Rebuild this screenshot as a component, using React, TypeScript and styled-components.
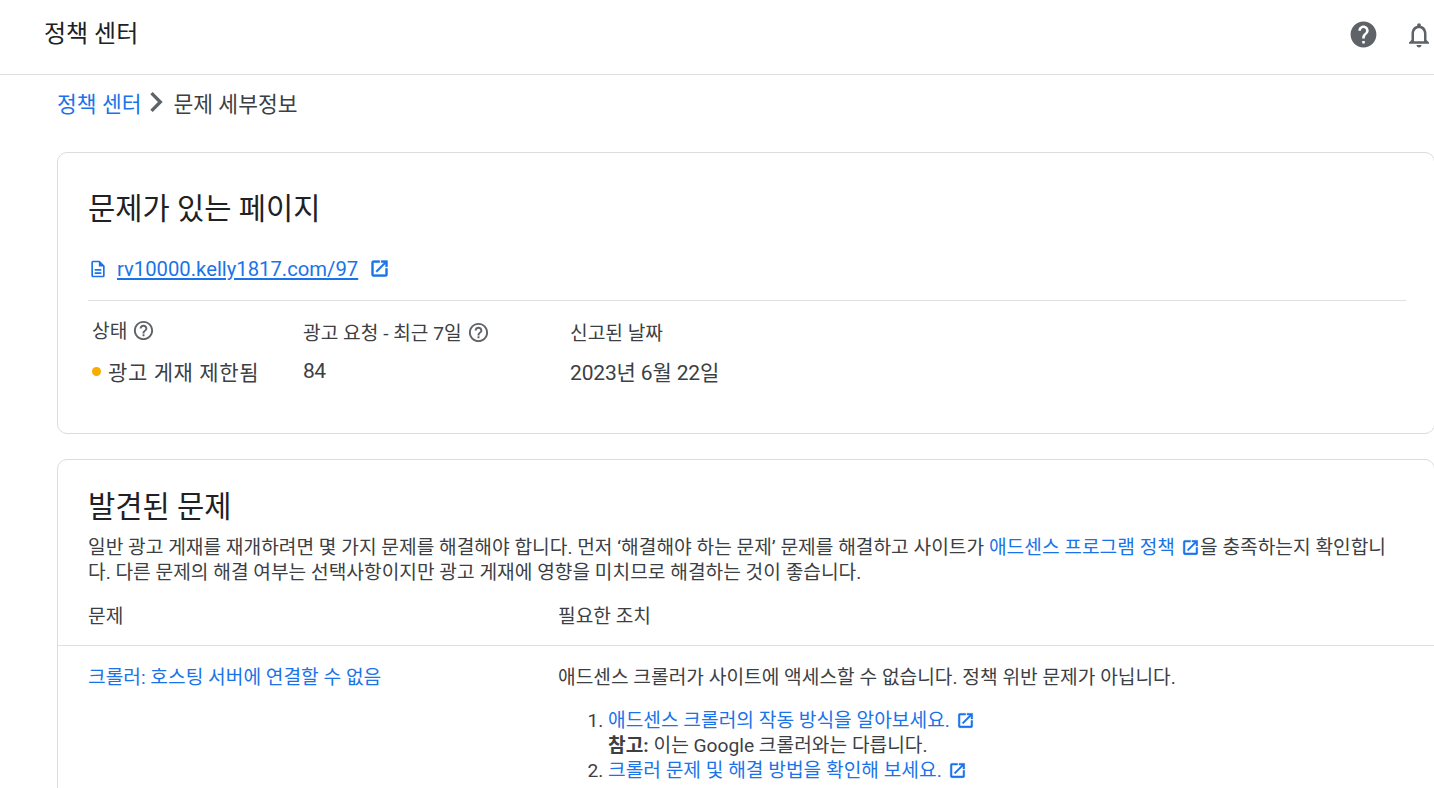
import React from "react";
import styled, { createGlobalStyle } from "styled-components";

const GlobalStyle = createGlobalStyle`
  html, body {
    margin: 0;
    padding: 0;
    height: 788px;
    overflow: hidden;
    background: #fff;
    font-family: Roboto, "Noto Sans CJK KR", sans-serif;
    color: #3c4043;
  }
`;

const Header = styled.header`
  display: flex;
  align-items: center;
  justify-content: space-between;
  height: 74px;
  padding: 0 0 0 44px;
  border-bottom: 1px solid #e0e0e0;
`;

const AppTitle = styled.div`
  font-size: 24px;
  color: #202124;
  margin-top: -11px;
`;

const HeaderIcons = styled.div`
  display: flex;
  align-items: center;
  gap: 25px;
  margin-top: -5px;
`;

const Main = styled.main`
  width: 1378px;
  margin-left: 57px;
`;

const Breadcrumb = styled.nav`
  display: flex;
  align-items: center;
  height: 54px;
  font-size: 21.5px;
  color: #3c4043;
  margin-bottom: 23px;
`;

const CrumbLink = styled.a`
  color: #1a73e8;
`;

const CrumbArrow = styled.svg`
  width: 40px;
  height: 40px;
  margin: 0 -3px 0 -5px;
  fill: #5f6368;
`;

const Card = styled.section<{ $height: number }>`
  box-sizing: border-box;
  height: ${(p) => p.$height}px;
  border: 1px solid #dadce0;
  border-radius: 10px;
  margin-bottom: 25px;
  background: #fff;
`;

const CardTitle = styled.h2`
  margin: 0;
  font-size: 29.6px;
  font-weight: 400;
  color: #202124;
  line-height: 40px;
`;

const TopBlock = styled.div<{ $top: number }>`
  padding: ${(p) => p.$top}px 28px 0 30px;
`;

const UrlRow = styled.div`
  display: flex;
  align-items: center;
  height: 59px;
  margin-top: 10px;
  border-bottom: 1px solid #e0e0e0;
  padding-bottom: 2px;
`;

const UrlLink = styled.a`
  color: #1a73e8;
  font-size: 20.25px;
  text-decoration: underline;
  margin: 0 11px 0 9px;
`;

const StatsGrid = styled.div`
  display: grid;
  grid-template-columns: 211px 267px 1fr;
  padding: 18px 0 0 4px;
  row-gap: 12px;
`;

const StatLabel = styled.div<{ $lift?: number }>`
  display: flex;
  align-items: center;
  gap: 5px;
  font-size: 19.2px;
  color: #3c4043;
  height: 26px;
  margin-top: ${(p) => -(p.$lift ?? 0)}px;
`;

const StatValue = styled.div<{ $spacing?: number }>`
  display: flex;
  align-items: center;
  font-size: 21px;
  letter-spacing: ${(p) => p.$spacing ?? 0}px;
  color: #3c4043;
  height: 28px;
`;

const StatusDot = styled.span`
  width: 9px;
  height: 9px;
  border-radius: 50%;
  background: #f9ab00;
  margin-right: 7px;
`;

const Description = styled.p`
  margin: 8px 0 0;
  padding: 0 30px;
  font-size: 19.2px;
  line-height: 25px;
  color: #3c4043;
  max-width: 1365px;
  box-sizing: border-box;
`;

const TextLink = styled.a`
  color: #1a73e8;
`;

const InlineIcon = styled.span`
  display: inline-block;
  vertical-align: -3px;
  margin: 0 0 0 6px;
  line-height: 0;
`;

const IssueHead = styled.div`
  display: grid;
  grid-template-columns: 470px 1fr;
  align-items: center;
  height: 60px;
  padding: 0 0 0 30px;
  font-size: 19.2px;
  color: #3c4043;
  border-bottom: 1px solid #e0e0e0;
`;

const IssueRow = styled.div`
  display: grid;
  grid-template-columns: 470px 1fr;
  padding: 19px 0 0 30px;
  font-size: 19.2px;
  line-height: 26px;
`;

const ActionList = styled.ol`
  margin: 17px 0 0;
  padding: 0 0 0 50px;
  line-height: 25px;
`;

const Strong = styled.strong`
  color: #3c4043;
  font-weight: 700;
`;

const OpenIcon = ({ size = 19 }: { size?: number }) => (
  <svg width={size} height={size} viewBox="0 0 24 24" fill="#1a73e8" stroke="#1a73e8" strokeWidth="0.7">
    <path d="M19 19H5V5h7V3H5a2 2 0 0 0-2 2v14a2 2 0 0 0 2 2h14a2 2 0 0 0 2-2v-7h-2v7zM14 3v2h3.59l-9.83 9.83 1.41 1.41L19 6.41V10h2V3h-7z" />
  </svg>
);

const HelpOutline = () => (
  <svg width="23" height="23" viewBox="0 0 24 24" fill="#5f6368">
    <path d="M11 18h2v-2h-2v2zm1-16C6.48 2 2 6.48 2 12s4.48 10 10 10 10-4.48 10-10S17.52 2 12 2zm0 18c-4.41 0-8-3.59-8-8s3.59-8 8-8 8 3.59 8 8-3.59 8-8 8zm0-14c-2.21 0-4 1.79-4 4h2c0-1.1.9-2 2-2s2 .9 2 2c0 2-3 1.75-3 5h2c0-2.25 3-2.5 3-5 0-2.21-1.79-4-4-4z" />
  </svg>
);

export default function App() {
  return (
    <>
      <GlobalStyle />
      <Header>
        <AppTitle>정책 센터</AppTitle>
        <HeaderIcons>
          <svg width="31" height="31" viewBox="0 0 24 24" fill="#5f6368">
            <path d="M12 2C6.48 2 2 6.48 2 12s4.48 10 10 10 10-4.48 10-10S17.52 2 12 2zm1 17h-2v-2h2v2zm2.07-7.75-.9.92C13.45 12.9 13 13.5 13 15h-2v-.5c0-1.1.45-2.1 1.17-2.83l1.24-1.26c.37-.36.59-.86.59-1.41 0-1.1-.9-2-2-2s-2 .9-2 2H8c0-2.21 1.79-4 4-4s4 1.79 4 4c0 .88-.36 1.68-.93 2.25z" />
          </svg>
          <svg width="30" height="30" viewBox="0 0 24 24" fill="#5f6368">
            <path d="M12 22c1.1 0 2-.9 2-2h-4c0 1.1.9 2 2 2zm6-6v-5c0-3.07-1.63-5.64-4.5-6.32V4c0-.83-.67-1.5-1.5-1.5s-1.5.67-1.5 1.5v.68C7.64 5.36 6 7.92 6 11v5l-2 2v1h16v-1l-2-2zm-2 1H8v-6c0-2.48 1.51-4.5 4-4.5s4 2.02 4 4.5v6z" />
          </svg>
        </HeaderIcons>
      </Header>
      <Main>
        <Breadcrumb>
          <CrumbLink>정책 센터</CrumbLink>
          <CrumbArrow viewBox="0 0 24 24">
            <path d="M8.59 16.59 13.17 12 8.59 7.41 10 6l6 6-6 6z" />
          </CrumbArrow>
          <span>문제 세부정보</span>
        </Breadcrumb>

        <Card $height={282}>
          <TopBlock $top={36}>
            <CardTitle>문제가 있는 페이지</CardTitle>
            <UrlRow>
              <svg width="20" height="20" viewBox="0 0 24 24" fill="#1a73e8">
                <path d="M14 2H6a2 2 0 0 0-2 2v16a2 2 0 0 0 2 2h12a2 2 0 0 0 2-2V8l-6-6zm4 18H6V4h7v5h5v11zM8 12h8v2H8v-2zm0 4h8v2H8v-2z" />
              </svg>
              <UrlLink>rv10000.kelly1817.com/97</UrlLink>
              <OpenIcon size={21} />
            </UrlRow>
            <StatsGrid>
              <StatLabel $lift={2}>
                상태 <HelpOutline />
              </StatLabel>
              <StatLabel>
                광고 요청 - 최근 7일 <HelpOutline />
              </StatLabel>
              <StatLabel>신고된 날짜</StatLabel>
              <StatValue $spacing={0.6}>
                <StatusDot />
                광고 게재 제한됨
              </StatValue>
              <StatValue $spacing={-0.5}>84</StatValue>
              <StatValue $spacing={-0.15}>2023년 6월 22일</StatValue>
            </StatsGrid>
          </TopBlock>
        </Card>

        <Card $height={420}>
          <TopBlock $top={27}>
            <CardTitle>발견된 문제</CardTitle>
          </TopBlock>
          <Description>
            일반 광고 게재를 재개하려면 몇 가지 문제를 해결해야 합니다. 먼저 ‘해결해야 하는 문제’ 문제를 해결하고 사이트가{" "}
            <TextLink>
              애드센스 프로그램 정책
              <InlineIcon>
                <OpenIcon />
              </InlineIcon>
            </TextLink>
            을 충족하는지 확인합니다. 다른 문제의 해결 여부는 선택사항이지만 광고 게재에 영향을 미치므로 해결하는 것이 좋습니다.
          </Description>
          <IssueHead>
            <span>문제</span>
            <span>필요한 조치</span>
          </IssueHead>
          <IssueRow>
            <TextLink>크롤러: 호스팅 서버에 연결할 수 없음</TextLink>
            <div>
              애드센스 크롤러가 사이트에 액세스할 수 없습니다. 정책 위반 문제가 아닙니다.
              <ActionList>
                <li>
                  <TextLink>
                    애드센스 크롤러의 작동 방식을 알아보세요.
                    <InlineIcon>
                      <OpenIcon />
                    </InlineIcon>
                  </TextLink>
                  <br />
                  <Strong>참고:</Strong> 이는 Google 크롤러와는 다릅니다.
                </li>
                <li>
                  <TextLink>
                    크롤러 문제 및 해결 방법을 확인해 보세요.
                    <InlineIcon>
                      <OpenIcon />
                    </InlineIcon>
                  </TextLink>
                </li>
              </ActionList>
            </div>
          </IssueRow>
        </Card>
      </Main>
    </>
  );
}
